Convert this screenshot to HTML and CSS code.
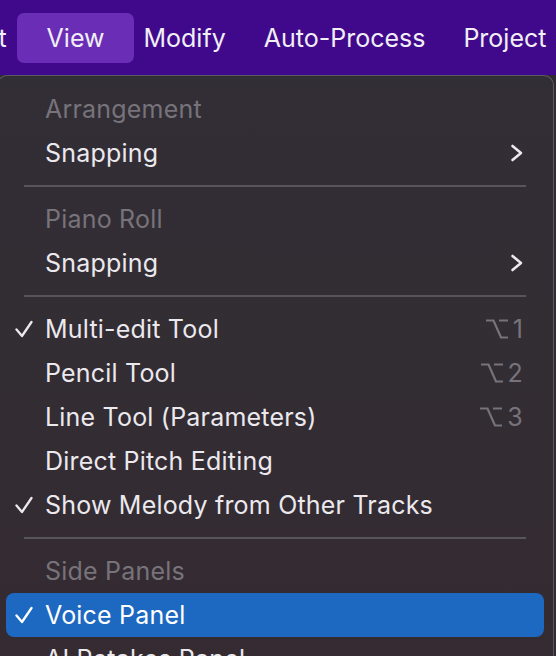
FILE: index.html
```html
<!DOCTYPE html>
<html>
<head>
<meta charset="utf-8">
<link rel="stylesheet" href="styles.css">
</head>
<body>
<nav class="menubar">
  <span class="mb-item mb-first">Edit</span>
  <span class="mb-item mb-active">View</span>
  <span class="mb-item">Modify</span>
  <span class="mb-item">Auto-Process</span>
  <span class="mb-item">Project</span>
</nav>
<div class="menu">
  <div class="row header"><span class="check"></span><span class="label">Arrangement</span></div>
  <div class="row"><span class="check"></span><span class="label">Snapping</span>
    <svg class="chev" width="14" height="18" viewBox="0 0 14 18"><polyline points="2.5,2 11,9 2.5,16" fill="none" stroke="#ebe9ee" stroke-width="2.6" stroke-linecap="round" stroke-linejoin="round"/></svg></div>
  <div class="sep"></div>
  <div class="row header"><span class="check"></span><span class="label">Piano Roll</span></div>
  <div class="row"><span class="check"></span><span class="label">Snapping</span>
    <svg class="chev" width="14" height="18" viewBox="0 0 14 18"><polyline points="2.5,2 11,9 2.5,16" fill="none" stroke="#ebe9ee" stroke-width="2.6" stroke-linecap="round" stroke-linejoin="round"/></svg></div>
  <div class="sep"></div>
  <div class="row"><span class="check"><svg width="18" height="18" viewBox="0 0 18 18"><polyline points="1.5,9.5 7,16 16.5,2" fill="none" stroke="#ebe9ee" stroke-width="2.3" stroke-linecap="round" stroke-linejoin="round"/></svg></span><span class="label">Multi-edit Tool</span>
    <span class="short"><svg width="24" height="20" viewBox="0 0 24 20"><path d="M1 1.5H8.5L16 18.5H23M14 1.5H23" fill="none" stroke="#77737a" stroke-width="2.2"/></svg><span>1</span></span></div>
  <div class="row"><span class="check"></span><span class="label">Pencil Tool</span>
    <span class="short"><svg width="24" height="20" viewBox="0 0 24 20"><path d="M1 1.5H8.5L16 18.5H23M14 1.5H23" fill="none" stroke="#77737a" stroke-width="2.2"/></svg><span>2</span></span></div>
  <div class="row"><span class="check"></span><span class="label">Line Tool (Parameters)</span>
    <span class="short"><svg width="24" height="20" viewBox="0 0 24 20"><path d="M1 1.5H8.5L16 18.5H23M14 1.5H23" fill="none" stroke="#77737a" stroke-width="2.2"/></svg><span>3</span></span></div>
  <div class="row"><span class="check"></span><span class="label">Direct Pitch Editing</span></div>
  <div class="row"><span class="check"><svg width="18" height="18" viewBox="0 0 18 18"><polyline points="1.5,9.5 7,16 16.5,2" fill="none" stroke="#ebe9ee" stroke-width="2.3" stroke-linecap="round" stroke-linejoin="round"/></svg></span><span class="label">Show Melody from Other Tracks</span></div>
  <div class="sep"></div>
  <div class="row header"><span class="check"></span><span class="label">Side Panels</span></div>
  <div class="row selected"><span class="check"><svg width="18" height="18" viewBox="0 0 18 18"><polyline points="1.5,9.5 7,16 16.5,2" fill="none" stroke="#ffffff" stroke-width="2.3" stroke-linecap="round" stroke-linejoin="round"/></svg></span><span class="label">Voice Panel</span></div>
  <div class="row"><span class="check"></span><span class="label">AI Retakes Panel</span></div>
</div>
</body>
</html>
```
FILE: styles.css
```css
html, body {
  margin: 0;
  padding: 0;
  height: 100%;
  overflow: hidden;
}
body {
  background: #2f2a31;
  font-family: Inter, "Noto Sans", sans-serif;
  color: #ebe9ee;
  width: 556px;
}
.menubar {
  height: 75px;
  background: #40098b;
  display: flex;
  align-items: center;
  white-space: nowrap;
  font-size: 25px;
  color: #f1eef6;
  overflow: hidden;
}
.mb-item {
  padding: 0 19px;
  line-height: 50px;
  flex: none;
}
.mb-first {
  margin-left: -57px;
}
.mb-active {
  background: #6a2db5;
  border-radius: 7px;
  padding: 0 30px 0 30px;
  margin: 0 -10px 0 -9px;
}
.menu {
  margin-left: -3px;
  width: 557px;
  height: 620px;
  box-sizing: border-box;
  border: 1px solid #5c5862;
  border-bottom: none;
  border-radius: 10px 10px 0 0;
  background: linear-gradient(180deg, #322e35 0%, #332c33 60%, #352b31 100%);
  padding-top: 11px;
  font-size: 25px;
  letter-spacing: 0.2px;
}
.row {
  height: 44px;
  margin: 0 9px 0 8px;
  padding: 0 21px 0 9px;
  display: flex;
  align-items: center;
  border-radius: 8px;
}
.check {
  width: 30px;
  flex: none;
  display: flex;
  align-items: center;
}
.label {
  flex: 1;
  white-space: nowrap;
}
.header .label {
  color: #77737a;
}
.chev {
  flex: none;
  margin-right: -1px;
}
.short {
  display: flex;
  align-items: center;
  gap: 4px;
  color: #77737a;
  flex: none;
}
.selected {
  background: #1d68c0;
  color: #ffffff;
}
.sep {
  height: 2px;
  background: #58545c;
  margin: 10px 27px 10px 26px;
}
```
